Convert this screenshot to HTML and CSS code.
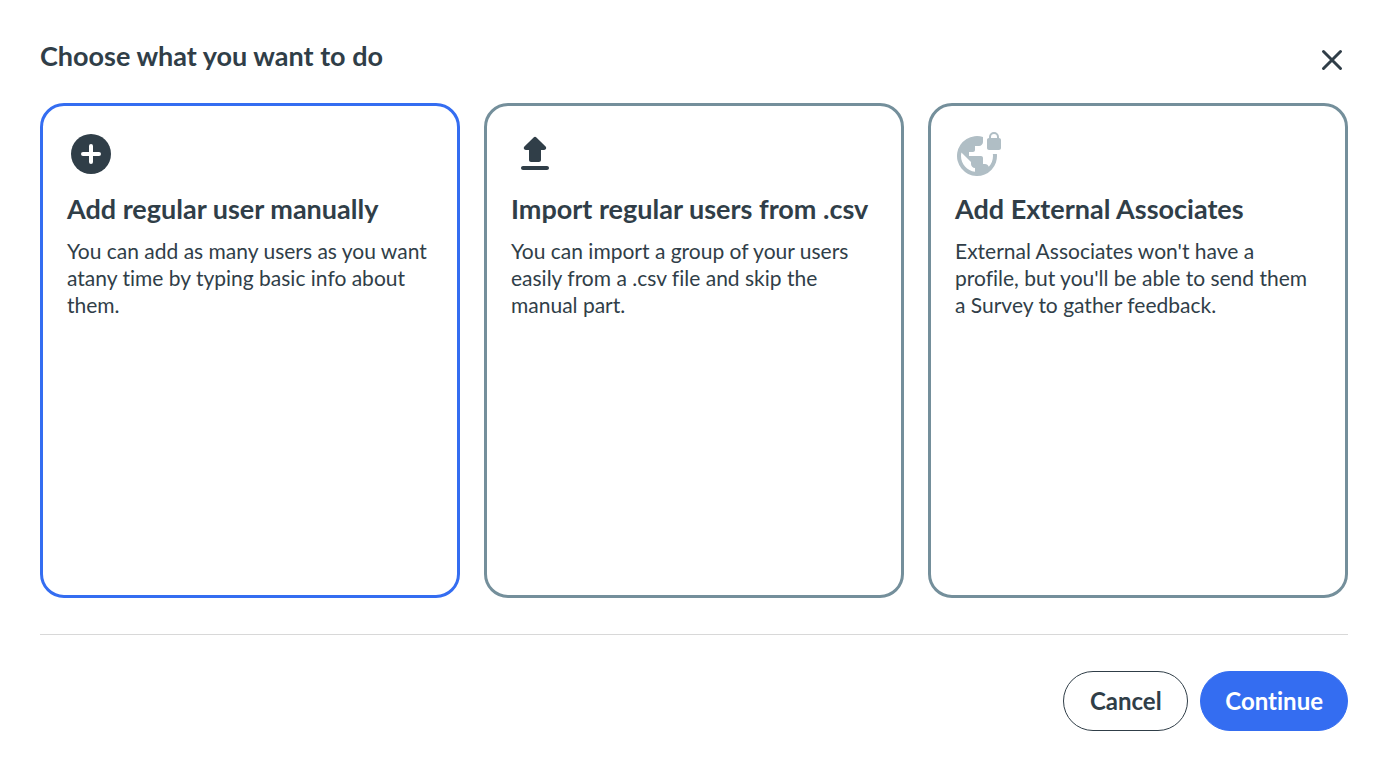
FILE: index.html
```html
<!DOCTYPE html>
<html lang="en">
<head>
  <meta charset="UTF-8">
  <meta name="viewport" content="width=device-width, initial-scale=1.0">
  <title>Add users</title>
  <link rel="stylesheet" href="styles.css">
</head>
<body>
  <form class="modal">
    <header class="modal-header">
      <h1>Choose what you want to do</h1>
      <button type="button" class="close" aria-label="Close">
        <svg viewBox="0 0 32 32" fill="none" stroke="currentColor" stroke-width="3" stroke-linecap="round">
          <path d="M7.5 7.5l17 17M24.5 7.5l-17 17"/>
        </svg>
      </button>
    </header>

    <div class="options">
      <label class="card">
        <input type="radio" name="action" value="manual" checked>
        <svg class="icon" viewBox="0 0 24 24">
          <circle cx="12" cy="12" r="10" fill="currentColor"/>
          <path d="M12 8v8M8 12h8" stroke="#fff" stroke-width="2" stroke-linecap="round"/>
        </svg>
        <h2>Add regular user manually</h2>
        <p>You can add as many users as you want atany time by typing basic info about them.</p>
      </label>

      <label class="card">
        <input type="radio" name="action" value="csv">
        <svg class="icon" viewBox="0 0 24 24" fill="currentColor">
          <path d="M10 16h4c.55 0 1-.45 1-1v-5h1.59c.89 0 1.34-1.08.71-1.71L12.71 3.7a1 1 0 0 0-1.41 0L6.71 8.29C6.08 8.92 6.52 10 7.41 10H9v5c0 .55.45 1 1 1zm-4 2h12c.55 0 1 .45 1 1s-.45 1-1 1H6c-.55 0-1-.45-1-1s.45-1 1-1z"/>
        </svg>
        <h2>Import regular users from .csv</h2>
        <p>You can import a group of your users easily from a .csv file and skip the manual part.</p>
      </label>

      <label class="card">
        <input type="radio" name="action" value="external">
        <svg class="icon icon-locked" viewBox="0 0 24 24" fill="currentColor">
          <path d="M22 4v-.5a2.5 2.5 0 0 0-5 0V4c-.55 0-1 .45-1 1v4c0 .55.45 1 1 1h5c.55 0 1-.45 1-1V5c0-.55-.45-1-1-1zm-1 0h-3v-.5a1.5 1.5 0 0 1 3 0V4zm-2.08 8c.04.33.08.66.08 1 0 2.08-.8 3.97-2.1 5.39-.26-.81-1-1.39-1.9-1.39h-1v-3c0-.55-.45-1-1-1H7v-2h2c.55 0 1-.45 1-1V8h2c1.1 0 2-.9 2-2V3.46A10 10 0 1 0 20.95 12h-2.03zM10 20.93c-3.95-.49-7-3.85-7-7.93 0-.62.08-1.21.21-1.79L8 16v1c0 1.1.9 2 2 2v1.93z"/>
        </svg>
        <h2>Add External Associates</h2>
        <p>External Associates won't have a profile, but you'll be able to send them a Survey to gather feedback.</p>
      </label>
    </div>

    <footer class="modal-footer">
      <button type="button" class="btn secondary">Cancel</button>
      <button type="submit" class="btn primary">Continue</button>
    </footer>
  </form>
</body>
</html>
```
FILE: styles.css
```css
* {
  margin: 0;
  padding: 0;
  box-sizing: border-box;
}

body {
  font-family: Lato, 'Open Sans', sans-serif;
  font-variant-ligatures: none;
  background-color: #fff;
  color: #303e48;
}

.modal {
  display: flex;
  flex-direction: column;
  min-height: 100vh;
  padding: 40px 40px 44px;
}

.modal-header {
  display: flex;
  justify-content: space-between;
  margin-bottom: 27px;
}

h1,
h2 {
  font-size: 27px;
  font-weight: 700;
  line-height: 32px;
}

button {
  font-family: inherit;
  cursor: pointer;
}

.close {
  width: 32px;
  height: 32px;
  margin-top: 4px;
  border: none;
  background: none;
  color: inherit;
}

.close svg {
  display: block;
}

.options {
  display: grid;
  grid-template-columns: repeat(3, 1fr);
  gap: 24px;
  flex: 1;
}

.card {
  padding: 24px;
  border: 3px solid #748f9b;
  border-radius: 24px;
  cursor: pointer;
}

.card:has(input:checked) {
  border-color: #346df1;
}

.card input {
  position: absolute;
  opacity: 0;
}

.icon {
  display: block;
  width: 48px;
  height: 48px;
  margin-bottom: 15px;
}

.icon-locked {
  color: #b0bec5;
}

.card h2 {
  margin-bottom: 12px;
}

.card p {
  font-size: 21px;
  line-height: 27px;
}

.modal-footer {
  display: flex;
  justify-content: flex-end;
  gap: 12px;
  margin-top: 36px;
  padding-top: 36px;
  border-top: 1px solid #d8d8d8;
}

.btn {
  min-width: 125px;
  height: 60px;
  padding: 0 24px 2px;
  border: 1px solid #303e48;
  border-radius: 30px;
  font-size: 24px;
  font-weight: 700;
  font-variant-ligatures: none;
}

.secondary {
  background-color: #fff;
  color: #303e48;
}

.primary {
  border-color: #346df1;
  background-color: #346df1;
  color: #fff;
}
```
